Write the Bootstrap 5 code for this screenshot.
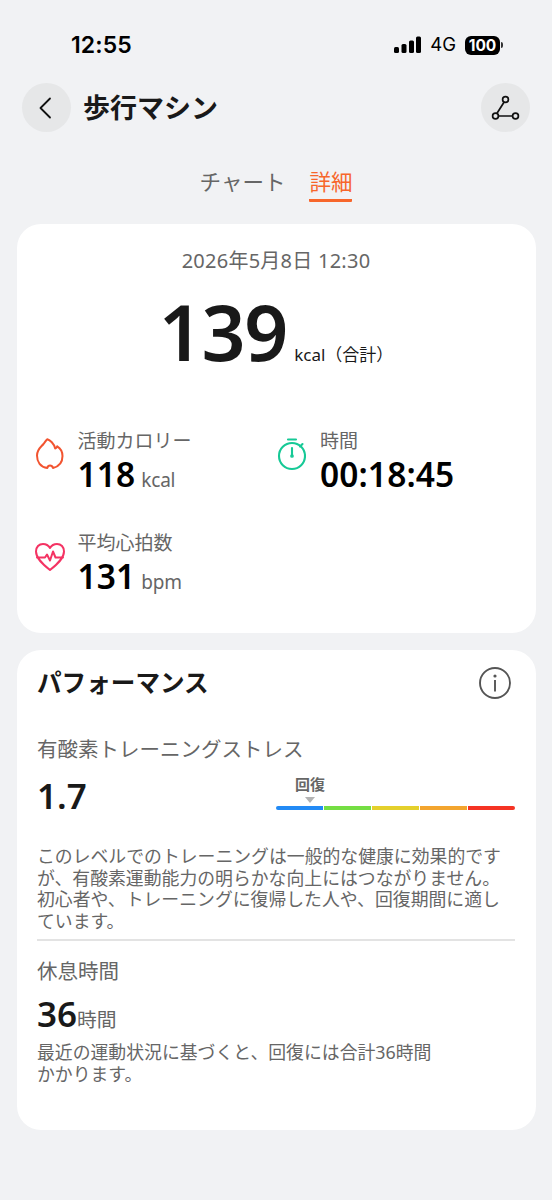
<!DOCTYPE html>
<html lang="ja">
<head>
<meta charset="utf-8">
<meta name="viewport" content="width=device-width, initial-scale=1">
<title>歩行マシン</title>
<link rel="stylesheet" href="https://cdn.jsdelivr.net/npm/bootstrap@5.3.0/dist/css/bootstrap.min.css">
<style>
body{background:#f1f2f4;color:#191919;font-family:"Noto Sans","Noto Sans CJK JP",sans-serif;height:1200px;overflow:hidden}
svg{display:block;flex:none}
.ln{white-space:nowrap}
.muted{color:#666}
.num{font-family:"Noto Sans",sans-serif;font-weight:600}
.status{height:82px;padding:8px 49px 0 71px;color:#000;font-family:Inter,sans-serif}
.clock{font-size:23px;font-weight:600;letter-spacing:.1px}
.net{font-size:18.5px;margin:0 9px 0 8px}
.batt{width:35px;height:19px;border-radius:6px;background:#000;color:#fff;font-size:15.5px;font-weight:700;line-height:19px;text-align:center}
.batt-cap{width:2px;height:6px;background:#333;border-radius:0 2px 2px 0;margin-left:1px}
.topbar{height:50px;padding:0 22px}
.round{width:49px;height:49px;background:#e6e7e8}
.title{font-size:27px;line-height:50px;font-weight:700;margin:2px 0 0 12px}
.tabs{height:92px;padding-top:32px;gap:24px;font-size:21.5px;line-height:36px}
.tab-on{color:#f7662b;height:38px;border-bottom:3px solid #f7662b;border-radius:0 0 1px 1px}
.panel{background:#fff;border-radius:24px;margin:0 16.5px}
.sum{height:409px;padding:21px 18px 0}
.date{font-size:20px;line-height:32px;letter-spacing:.25px}
.big{font-size:77px;line-height:80px;letter-spacing:-1.2px}
.cell-label{font-size:19px;line-height:26px}
.cell-val{font-size:33.5px;line-height:40px;height:40px;color:#000}
.cell-val .num{letter-spacing:.1px}
.unit{font-size:19px;margin-left:6px;letter-spacing:-.2px}
.perf{margin-top:17px;height:479.5px;padding:14px 20.5px 0}
.sec{font-size:20.5px;line-height:30px}
.desc{font-size:17.85px;line-height:21.5px}
.scale{width:239px}
.seg{height:4px;flex:1}
.rule{height:2px;background:#e3e3e3}
</style>
</head>
<body>
<div class="status d-flex align-items-center justify-content-between">
  <div class="clock ln">12:55</div>
  <div class="d-flex align-items-center">
    <svg width="28" height="18" viewBox="0 0 28 18"><rect x="0" y="11" width="5" height="6" rx="1.5"/><rect x="7.5" y="8" width="5" height="9" rx="1.5"/><rect x="15" y="4.500" width="5" height="12.500" rx="1.500"/><rect x="22" y="0.500" width="5" height="16.500" rx="1.500"/></svg>
    <div class="net ln">4G</div>
    <div class="batt">100</div><div class="batt-cap"></div>
  </div>
</div>
<header class="topbar d-flex align-items-center">
  <div class="round rounded-circle d-flex align-items-center justify-content-center">
    <svg width="49" height="49" viewBox="0 0 49 49" fill="none" stroke="#111" stroke-width="1.8" stroke-linecap="round" stroke-linejoin="round"><path d="M28 15.500 18.500 25 28 34.500"/></svg>
  </div>
  <h1 class="title ln">歩行マシン</h1>
  <div class="round rounded-circle ms-auto">
    <svg width="49" height="49" viewBox="0 0 49 49" fill="none" stroke="#111" stroke-width="1.7"><circle cx="24.500" cy="16.500" r="2.900"/><circle cx="14.500" cy="33" r="2.900"/><circle cx="34.500" cy="33" r="2.900"/><path d="M23 19.200 16 30.300M17.500 33h14"/></svg>
  </div>
</header>
<nav class="tabs d-flex justify-content-center">
  <div class="muted ln">チャート</div>
  <div class="tab-on ln">詳細</div>
</nav>
<main>
<section class="panel sum">
  <div class="date muted text-center ln">2026年5月8日 12:30</div>
  <div class="d-flex justify-content-center align-items-baseline" style="margin-top:15px">
    <div class="num big">139</div>
    <div class="ln" style="font-size:17px;margin-left:7px">kcal（合計）</div>
  </div>
  <div class="row g-0 cells" style="margin-top:56px">
    <div class="col-6 d-flex">
      <svg class="mt-2" width="30" height="36" viewBox="0 0 30 36" fill="none" stroke="#f25430" stroke-width="2" stroke-linejoin="round" stroke-linecap="round"><path d="M12.300 32C5.500 31 2 26 2 19.500 2 13.500 5.500 11.500 8.500 8 10 6 10.800 4.500 12.300 3.200 15 4 19 7.500 20.200 12.500 21.300 12.300 21.900 11.200 22.200 10.300 25 12 27.500 16 27.500 20 27.500 26 24 30.500 18 32 17.500 30.300 16.500 29.500 15 29.500S12.700 30.300 12.300 32Z"/></svg>
      <div style="margin-left:13px"><div class="cell-label muted ln">活動カロリー</div><div class="cell-val ln"><span class="num">118</span><span class="unit muted">kcal</span></div></div>
    </div>
    <div class="col-6 d-flex">
      <svg class="mt-2" width="30" height="36" viewBox="0 0 30 36" fill="none" stroke="#16c996" stroke-width="2.100" stroke-linecap="round"><circle cx="16" cy="20" r="13"/><path d="M12 3.500h8M24 10.500l2.500-2.500M16 12v7"/><circle cx="16" cy="20" r=".8" fill="#16c996"/></svg>
      <div style="margin-left:14px"><div class="cell-label muted ln">時間</div><div class="cell-val ln"><span class="num">00:18:45</span></div></div>
    </div>
    <div class="col-6 d-flex" style="margin-top:36px">
      <svg class="mt-2" width="30" height="36" viewBox="0 0 30 36" fill="none" stroke="#f43363" stroke-width="2" stroke-linejoin="round" stroke-linecap="round"><path d="M15 32C8 26.500 1 20.500 1 13.500 1 9 4 6 8 6 11 6 13.500 7.500 15 10 16.500 7.500 19 6 22 6 26 6 29 9 29 13.500 29 20.500 22 26.500 15 32ZM2 19.500H10L12 16.500 15 22.500 18 13.500 20.500 19.500H28"/></svg>
      <div style="margin-left:13px"><div class="cell-label muted ln">平均心拍数</div><div class="cell-val ln"><span class="num">131</span><span class="unit muted">bpm</span></div></div>
    </div>
  </div>
</section>
<section class="panel perf">
  <div class="d-flex justify-content-between align-items-center" style="height:38px">
    <h2 class="ln m-0 fw-bold" style="font-size:24.6px">パフォーマンス</h2>
    <svg width="40" height="40" viewBox="0 0 40 40" fill="none" stroke="#555" stroke-width="1.900"><circle cx="20" cy="20" r="15"/><path d="M20 17v11.500"/><circle cx="20" cy="13" r="1.600" fill="#555" stroke="none"/></svg>
  </div>
  <div class="sec muted ln" style="margin-top:32px">有酸素トレーニングストレス</div>
  <div class="d-flex justify-content-between">
    <div class="num ln" style="font-size:35px;line-height:64px">1.7</div>
    <div class="scale" style="padding-top:8px">
      <div class="muted fw-bold ln" style="font-size:15px;line-height:24px;margin-left:19px">回復</div>
      <svg width="10" height="6" viewBox="0 0 10 6" style="margin:1px 0 3px 29px"><path d="M0 0h10L5 6Z" fill="#b3b3b3"/></svg>
      <div class="d-flex" style="gap:1px">
        <div class="seg rounded-start-pill" style="background:#228af5"></div>
        <div class="seg" style="background:#74de43"></div>
        <div class="seg" style="background:#e4d02c"></div>
        <div class="seg" style="background:#f3a52e"></div>
        <div class="seg rounded-end-pill" style="background:#f53324"></div>
      </div>
    </div>
  </div>
  <div class="desc muted ln" style="margin-top:18px">このレベルでのトレーニングは一般的な健康に効果的です<br>が、有酸素運動能力の明らかな向上にはつながりません。<br>初心者や、トレーニングに復帰した人や、回復期間に適し<br>ています。</div>
  <div class="rule" style="margin-top:7px"></div>
  <div class="sec muted ln" style="margin-top:15px">休息時間</div>
  <div class="ln" style="line-height:46px;height:46px;margin-top:5px"><span class="num" style="font-size:35px">36</span><span class="muted" style="font-size:19.800px">時間</span></div>
  <div class="desc muted ln" style="margin-top:5px">最近の運動状況に基づくと、回復には合計36時間<br>かかります。</div>
</section>
</main>
<script src="https://cdn.jsdelivr.net/npm/bootstrap@5.3.0/dist/js/bootstrap.bundle.min.js"></script>
</body>
</html>
